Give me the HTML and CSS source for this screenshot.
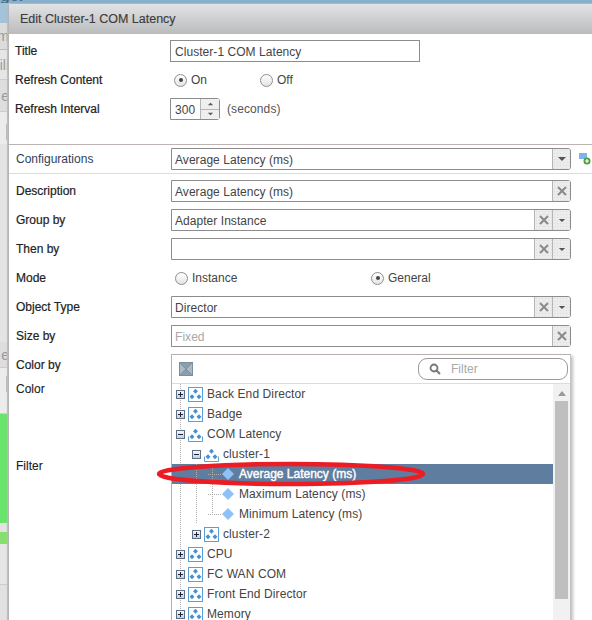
FILE: index.html
```html
<!DOCTYPE html>
<html lang="en">
<head>
<meta charset="utf-8">
<title>Edit Cluster-1 COM Latency</title>
<link rel="stylesheet" href="styles.css">
</head>
<body>
<svg class="defs" width="0" height="0" aria-hidden="true">
  <defs>
    <symbol id="diamonds" viewBox="0 0 15 15">
      <path d="M7.500 1.800 10 4.300 7.500 6.800 5 4.300Z M4 7.300 6.500 9.800 4 12.300 1.500 9.800Z M11 7.300 13.500 9.800 11 12.300 8.500 9.800Z" fill="#4a90d0"/>
    </symbol>
    <symbol id="group-closed" viewBox="0 0 15 15">
      <rect x=".5" y=".5" width="14" height="14" fill="#fff" stroke="#5b9fd8"/>
      <use href="#diamonds" width="15" height="15"/>
    </symbol>
    <symbol id="group-open" viewBox="0 0 15 15">
      <path d="M.5 9.500V14.500H14.500V9.500" fill="none" stroke="#5b9fd8"/>
      <use href="#diamonds" width="15" height="15"/>
    </symbol>
    <symbol id="metric" viewBox="0 0 12 12">
      <path d="M6 0 12 6 6 12 0 6Z" fill="#8cc2f7"/>
    </symbol>
    <symbol id="cross" viewBox="0 0 10 10">
      <path d="M1 1 9 9M9 1 1 9" fill="none" stroke="#8a8a8a" stroke-width="2"/>
    </symbol>
    <symbol id="caret" viewBox="0 0 10 6">
      <path d="M1 1H9L5 5Z" fill="#555"/>
    </symbol>
  </defs>
</svg>

<div class="page">
  <div class="backdrop">
    <div class="top-band"><span>ger</span></div>
    <div class="strip strip-blue"></div>
    <div class="strip strip-a"><span>m</span></div>
    <div class="strip strip-b"><span>ili</span></div>
    <div class="strip strip-c"><span>e</span></div>
    <div class="strip strip-d"><i class="tick"></i></div>
    <div class="strip strip-e"></div>
    <div class="strip strip-c strip-f"><span>e</span></div>
    <div class="strip strip-d strip-g"><i class="tick"></i></div>
    <div class="strip strip-green"></div>
    <div class="strip strip-gap"></div>
    <div class="strip strip-green2"></div>
    <div class="strip strip-h"></div>
    <div class="strip strip-i"></div>
  </div>

  <section class="dialog">
    <header class="dialog-head">Edit Cluster-1 COM Latency</header>

    <div class="dialog-body">
      <div class="group-top">
        <div class="row">
          <div class="label">Title</div>
          <div class="field field-title"><span class="value">Cluster-1 COM Latency</span></div>
        </div>
        <div class="row">
          <div class="label">Refresh Content</div>
          <div class="radios">
            <label class="radio radio-on-off"><i class="dot dot-on"></i>On</label>
            <label class="radio"><i class="dot"></i>Off</label>
          </div>
        </div>
        <div class="row">
          <div class="label">Refresh Interval</div>
          <div class="spinner">
            <span class="value">300</span>
            <div class="spin">
              <span class="spin-btn"><svg class="spin-up" width="7" height="4"><use href="#caret" width="7" height="4"/></svg></span>
              <span class="spin-btn"><svg width="7" height="4"><use href="#caret" width="7" height="4"/></svg></span>
            </div>
          </div>
          <span class="unit">(seconds)</span>
        </div>
      </div>

      <div class="config-band">
        <div class="config-label">Configurations</div>
        <div class="field field-wide">
          <span class="value">Average Latency (ms)</span>
          <span class="btn btn-end"><svg width="10" height="6"><use href="#caret" width="10" height="6"/></svg></span>
        </div>
        <svg class="add-icon" width="12" height="12" viewBox="0 0 12 12">
          <rect x="0" y="0" width="8" height="6" fill="#7fb4ea"/>
          <circle cx="8" cy="8" r="3.500" fill="#4f9e3c"/>
          <path d="M8 6V10M6 8H10" stroke="#fff" stroke-width="1.200"/>
        </svg>
      </div>

      <div class="group-main">
        <div class="row">
          <div class="label">Description</div>
          <div class="field field-wide">
            <span class="value">Average Latency (ms)</span>
            <span class="btn btn-square"><svg width="10" height="10"><use href="#cross" width="10" height="10"/></svg></span>
          </div>
        </div>
        <div class="row">
          <div class="label">Group by</div>
          <div class="field field-wide">
            <span class="value">Adapter Instance</span>
            <span class="btn"><svg width="10" height="10"><use href="#cross" width="10" height="10"/></svg></span>
            <span class="btn btn-end"><svg width="8" height="5"><use href="#caret" width="8" height="5"/></svg></span>
          </div>
        </div>
        <div class="row">
          <div class="label">Then by</div>
          <div class="field field-wide">
            <span class="value"></span>
            <span class="btn"><svg width="10" height="10"><use href="#cross" width="10" height="10"/></svg></span>
            <span class="btn btn-end"><svg width="8" height="5"><use href="#caret" width="8" height="5"/></svg></span>
          </div>
        </div>
        <div class="row">
          <div class="label">Mode</div>
          <div class="radios radios-mode">
            <label class="radio radio-instance"><i class="dot"></i>Instance</label>
            <label class="radio"><i class="dot dot-on"></i>General</label>
          </div>
        </div>
        <div class="row">
          <div class="label">Object Type</div>
          <div class="field field-wide">
            <span class="value">Director</span>
            <span class="btn"><svg width="10" height="10"><use href="#cross" width="10" height="10"/></svg></span>
            <span class="btn btn-end"><svg width="8" height="5"><use href="#caret" width="8" height="5"/></svg></span>
          </div>
        </div>
        <div class="row">
          <div class="label">Size by</div>
          <div class="field field-wide">
            <span class="value value-muted">Fixed</span>
            <span class="btn btn-square"><svg width="10" height="10"><use href="#cross" width="10" height="10"/></svg></span>
          </div>
        </div>
        <div class="row">
          <div class="label">Color by</div>
        </div>
        <div class="row row-color">
          <div class="label">Color</div>
        </div>
        <div class="row row-filter">
          <div class="label">Filter</div>
        </div>
      </div>

      <div class="popup">
        <div class="popup-head">
          <svg class="collapse-icon" width="14" height="14" viewBox="0 0 14 14">
            <rect width="14" height="14" fill="#a9bac6"/>
            <path d="M0 0H14L7 7ZM0 14H14L7 7Z" fill="#8b9fae"/>
            <path d="M.5 .5H13.500V13.500H.5ZM0 0 14 14M14 0 0 14" fill="none" stroke="#7d8f9c"/>
          </svg>
          <div class="search">
            <svg width="12" height="12" viewBox="0 0 12 12">
              <circle cx="5" cy="5" r="3.500" fill="none" stroke="#777" stroke-width="1.800"/>
              <path d="M7.500 7.500 11 11" stroke="#777" stroke-width="2"/>
            </svg>
            <span>Filter</span>
          </div>
        </div>
        <div class="popup-main">
          <ul class="tree">
            <li class="node"><i class="exp exp-plus"></i><svg class="ico"><use href="#group-closed"/></svg>Back End Director</li>
            <li class="node"><i class="exp exp-plus"></i><svg class="ico"><use href="#group-closed"/></svg>Badge</li>
            <li class="node"><i class="exp exp-minus"></i><svg class="ico"><use href="#group-open"/></svg>COM Latency</li>
            <li class="node"><i class="guide guide-blank"></i><i class="exp exp-minus"></i><svg class="ico"><use href="#group-open"/></svg>cluster-1</li>
            <li class="node node-selected"><i class="guide guide-blank"></i><i class="guide"></i><i class="stub"></i><svg class="leaf"><use href="#metric"/></svg>Average Latency (ms)</li>
            <li class="node"><i class="guide guide-blank"></i><i class="guide"></i><i class="stub"></i><svg class="leaf"><use href="#metric"/></svg>Maximum Latency (ms)</li>
            <li class="node"><i class="guide guide-blank"></i><i class="guide"></i><i class="stub stub-end"></i><svg class="leaf"><use href="#metric"/></svg>Minimum Latency (ms)</li>
            <li class="node"><i class="guide guide-blank"></i><i class="exp exp-plus"></i><svg class="ico"><use href="#group-closed"/></svg>cluster-2</li>
            <li class="node"><i class="exp exp-plus"></i><svg class="ico"><use href="#group-closed"/></svg>CPU</li>
            <li class="node"><i class="exp exp-plus"></i><svg class="ico"><use href="#group-closed"/></svg>FC WAN COM</li>
            <li class="node"><i class="exp exp-plus"></i><svg class="ico"><use href="#group-closed"/></svg>Front End Director</li>
            <li class="node"><i class="exp exp-plus"></i><svg class="ico"><use href="#group-closed"/></svg>Memory</li>
          </ul>
          <div class="scrollbar">
            <svg class="scroll-up" width="8" height="5" viewBox="0 0 8 5"><path d="M0 5H8L4 0Z" fill="#999"/></svg>
            <div class="scroll-thumb"></div>
          </div>
        </div>
      </div>
    </div>
  </section>

  <svg class="annotation" width="276" height="30" viewBox="0 0 276 30">
    <ellipse cx="135" cy="15" rx="132" ry="10" fill="none" stroke="#ec1c24" stroke-width="4.500"/>
  </svg>
</div>
</body>
</html>
```
FILE: styles.css
```css
* { box-sizing: border-box; }
html, body { margin: 0; padding: 0; }
body { font-family: "Liberation Sans", Arial, sans-serif; font-size: 12px; color: #333; background: #e6e6e6; }
.defs { position: absolute; }
.page { position: relative; width: 592px; height: 620px; overflow: hidden; background: #e6e6e6; }

/* page behind the dialog */
.top-band { height: 3px; overflow: hidden; background: #86b0cd; font: 700 16px/4px "Liberation Sans", Arial, sans-serif; color: #4a6a80; white-space: nowrap; }
.top-band span { display: block; margin-top: -6px; }
.strip { width: 9px; overflow: hidden; font-size: 14px; color: #999; display: flex; justify-content: flex-end; align-items: center; white-space: nowrap; }
.strip-blue { height: 20px; background: #a3c3da; }
.strip-a { height: 27px; background: #dcdcdc; border-bottom: 1px solid #bbb; }
.strip-b { height: 30px; background: #e6e6e6; border-bottom: 1px solid #ccc; }
.strip-c { height: 32px; background: #dedede; border-bottom: 1px solid #ccc; }
.strip-d { height: 32px; background: #ececec; }
.strip-e { height: 198px; background: #e4e4e4; }
.strip-f { height: 26px; }
.strip-g { height: 46px; align-items: flex-start; border-bottom: 1px solid #d0d0d0; }
.tick { width: 1px; height: 16px; background: #bbb; margin-right: 2px; }
.strip-d .tick { margin-top: 8px; }
.strip-green { height: 109px; background: #69e56b; }
.strip-gap { height: 9px; background: #e2e2e2; }
.strip-green2 { height: 12px; background: #85e06d; }
.strip-h { height: 41px; background: #e6e6e6; border-bottom: 1px solid #ccc; }
.strip-i { height: 35px; background: #e2e2e2; }

/* dialog */
.dialog { position: absolute; left: 8px; top: 3px; width: 620px; height: 640px; background: #fff; border: 1px solid #b5b5b5; border-right: 0; border-radius: 4px 0 0 0; box-shadow: -1px 0 1px #bbb; }
.dialog-head { height: 30px; padding-left: 11px; display: flex; align-items: center; font-size: 12.500px; color: #3c3c3c; background: linear-gradient(#e2e3e5, #b9bbbd); -webkit-text-stroke: .15px #3c3c3c; }
.dialog-body { position: relative; }
.group-top { padding-top: 3px; height: 109px; }
.row { height: 29px; display: flex; align-items: center; padding: 0 0 1px 6px; }
.group-main .row { padding-left: 7px; }
.label { width: 155px; flex: none; color: #222; -webkit-text-stroke: .2px #222; }
.value { flex: 1; padding: 1px 0 0 4px; color: #444; white-space: nowrap; letter-spacing: .05px; }
.field-wide .value { padding-left: 3px; }
.value-muted { color: #a8a8a8; }
.field { height: 22px; display: flex; align-items: center; border: 1px solid #8c8c8c; background: #fff; }
.field-title { width: 250px; }
.field-wide { width: 400px; border-radius: 0 3px 3px 0; }
.btn { width: 18px; height: 20px; flex: none; display: flex; align-items: center; justify-content: center; border-left: 1px solid #b5b5b5; background: #ececec radial-gradient(#dcdcdc .5px, transparent .6px) 0 0 / 3px 3px; }
.btn-end { border-radius: 0 2px 2px 0; }
.btn-square { width: 18px; }

.radios { display: flex; padding-left: 4px; color: #444; }
.radio { display: flex; align-items: center; gap: 4px; }
.radio-on-off { width: 86px; }
.radios-mode { padding-left: 4px; }
.radio-instance { width: 196px; }
.dot { width: 13px; height: 13px; flex: none; border: 1px solid #8e8e8e; border-radius: 50%; background: linear-gradient(#fff, #e4e4e4); display: flex; align-items: center; justify-content: center; }
.dot-on::after { content: ""; width: 4px; height: 4px; border-radius: 50%; background: #444; }

.spinner { width: 50px; height: 22px; display: flex; align-items: center; border: 1px solid #8c8c8c; border-radius: 0 3px 3px 0; }
.spin { width: 19px; height: 20px; flex: none; display: flex; flex-direction: column; border-left: 1px solid #b5b5b5; }
.spin-btn { flex: 1; display: flex; align-items: center; justify-content: center; background: #efefef; }
.spin-btn + .spin-btn { border-top: 1px solid #b5b5b5; }
.spin-up { transform: rotate(180deg); }
.unit { margin-left: 7px; color: #555; letter-spacing: .1px; }

/* configurations band */
.config-band { margin-top: 1px; height: 30px; display: flex; align-items: center; padding-left: 7px; border-top: 1px solid #bdb3b3; border-bottom: 1px solid #ddd; }
.config-label { width: 155px; flex: none; color: #2f3f5a; }
.add-icon { margin-left: 8px; margin-top: -1px; flex: none; }
.group-main { padding-top: 3px; }
.row-color { height: 72px; align-items: flex-start; }
.row-color .label, .row-filter .label { -webkit-text-stroke: .1px #222; }
.row-color .label { line-height: 18px; }

/* popup tree */
.popup { position: absolute; left: 162px; top: 320px; width: 400px; height: 300px; background: #fff; border: 1px solid #b9b0b0; border-right-color: #c4c4c4; box-shadow: 2px 2px 3px rgba(0,0,0,.25); }
.popup-head { height: 29px; display: flex; align-items: center; justify-content: space-between; padding: 0 2px 0 7px; border-bottom: 1px solid #dcdcdc; }
.search { width: 150px; height: 22px; display: flex; align-items: center; gap: 10px; padding-left: 10px; border: 1px solid #999; border-radius: 9px; color: #a9a9a9; }
.popup-main { display: flex; height: 270px; }
.tree { flex: 1; list-style: none; margin: 0; padding: 0; background: linear-gradient(#b0b0b0 50%, transparent 50%) 8px 0 / 1px 2px repeat-y; }
.node { height: 20px; display: flex; align-items: center; padding-left: 4px; color: #444; white-space: nowrap; letter-spacing: .1px; }
.node-selected { background: #5f7d9f; color: #fff; -webkit-text-stroke: .4px #fff; letter-spacing: 0; }
.guide { width: 16px; height: 20px; flex: none; background: linear-gradient(#b0b0b0 50%, transparent 50%) 4px 0 / 1px 2px repeat-y; }
.guide-blank { background: none; }
.stub { width: 14px; height: 20px; flex: none; background: linear-gradient(#b0b0b0 50%, transparent 50%) 4px 0 / 1px 2px repeat-y, linear-gradient(90deg, #b0b0b0 50%, transparent 50%) 4px 10px / 2px 1px repeat-x; background-size: 1px 2px, 2px 1px; }
.stub-end { clip-path: inset(0 0 9px 0); }
.exp { position: relative; width: 9px; height: 9px; flex: none; margin-right: 3px; border: 1px solid #5d6f85; background: linear-gradient(#f4f7fa, #c4d0de); }
.exp::before { content: ""; position: absolute; left: 1px; top: 3px; width: 5px; height: 1px; background: #223; }
.exp-plus::after { content: ""; position: absolute; left: 3px; top: 1px; width: 1px; height: 5px; background: #223; }
.ico { width: 15px; height: 15px; flex: none; margin-right: 4px; }
.leaf { width: 12px; height: 12px; flex: none; margin-right: 5px; }
.scrollbar { width: 17px; flex: none; background: #f1f1f1; padding: 7px 2px 0; display: flex; flex-direction: column; align-items: center; }
.scroll-up { flex: none; }
.scroll-thumb { width: 13px; height: 198px; margin-top: 5px; background: #bfbfbf; }

/* hand-drawn annotation on top of the screenshot */
.annotation { position: absolute; left: 156px; top: 459px; }
```
